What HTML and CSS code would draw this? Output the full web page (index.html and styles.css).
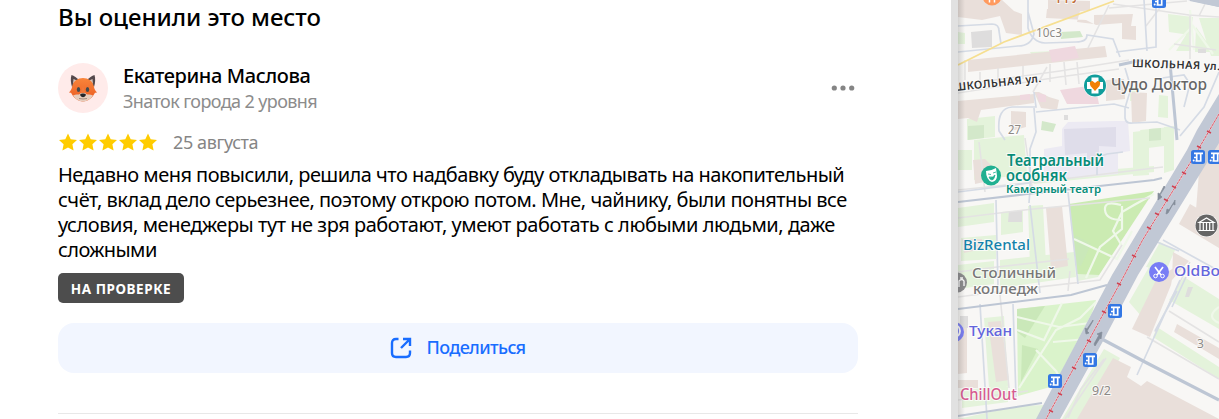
FILE: index.html
```html
<!DOCTYPE html>
<html lang="ru">
<head>
  <meta charset="UTF-8" />
  <meta name="viewport" content="width=device-width, initial-scale=1.0"/>
  <title>Отзыв</title>
  <link rel="stylesheet" href="styles.css">
</head>
<body>
  <main class="panel">
    <h2 class="title">Вы оценили это место</h2>

    <div class="author">
      <div class="avatar">
        <svg width="30" height="28" viewBox="0 0 30 28">
          <defs>
            <linearGradient id="fur" x1="0" y1="0" x2="0" y2="1">
              <stop offset="0" stop-color="#f9853a"/>
              <stop offset="1" stop-color="#ea5a22"/>
            </linearGradient>
          </defs>
          <path d="M3.500 1C2.500 4 2.600 9 4 13l7-7C9 4 6 1.500 3.500 1z" fill="#54484b"/>
          <path d="M26.500 1c1 3 .9 8-.5 12l-7-7c2-2 5-4.500 7.500-5z" fill="#54484b"/>
          <path d="M5.500 5l-.5 5 4-3.500zM24.500 5l.5 5-4-3.500z" fill="#d8c1b6"/>
          <path d="M15 4C10 4 5 7 4 13c-.3 2-1.500 4-3 5.500 1 .2 1.500.2 2 .2C5 23 10 27.500 15 27.500S25 23 27 18.700c.5 0 1 0 2-.2-1.500-1.500-2.700-3.500-3-5.500C25 7 20 4 15 4z" fill="url(#fur)"/>
          <path d="M5 21.500c3-1.500 5-.5 7-1.500l3-4 3 4c2 1 4 0 7 1.500C22.500 25 19 27.500 15 27.500S7.500 25 5 21.500z" fill="#e6cdbd"/>
          <path d="M12.500 19L15 12l2.500 7z" fill="#f07a3c"/>
          <ellipse cx="10.500" cy="15.500" rx="1.700" ry="2.500" fill="#454b4d"/>
          <ellipse cx="19.500" cy="15.500" rx="1.700" ry="2.500" fill="#454b4d"/>
          <path d="M12 20.500c1-1.500 5-1.500 6 0 0 1.500-2 2.700-3 2.700s-3-1.200-3-2.700z" fill="#242629"/>
          <path d="M11 24.500q4 1 8 0" stroke="#a08a7e" fill="none"/>
        </svg>
      </div>
      <div class="who">
        <div class="name">Екатерина Маслова</div>
        <div class="level">Знаток города 2 уровня</div>
      </div>
      <svg class="more" width="24" height="8" viewBox="0 0 24 8">
        <circle cx="3.300" cy="4" r="2.600"/><circle cx="12" cy="4" r="2.600"/><circle cx="20.700" cy="4" r="2.600"/>
      </svg>
    </div>

    <div class="rating">
      <svg width="100" height="20" viewBox="0 0 100 20">
        <defs>
          <path id="star" d="M10 1.500l2.700 5.700 6.300.8-4.600 4.200 1.200 6.200-5.600-3-5.600 3 1.200-6.200L1 8l6.300-.8z"/>
        </defs>
        <use href="#star"/><use href="#star" x="20"/><use href="#star" x="40"/><use href="#star" x="60"/><use href="#star" x="80"/>
      </svg>
      <span class="date">25 августа</span>
    </div>

    <p class="text">
      <span class="l1">Недавно меня повысили, решила что надбавку буду откладывать на накопительный</span><br>
      <span class="l2">счёт, вклад дело серьезнее, поэтому открою потом. Мне, чайнику, были понятны все</span><br>
      <span class="l3">условия, менеджеры тут не зря работают, умеют работать с любыми людьми, даже</span><br>
      <span class="l4">сложными</span>
    </p>

    <div class="status">НА ПРОВЕРКЕ</div>

    <button class="share">
      <svg width="24" height="24" viewBox="0 0 24 24">
        <path d="M9.500 3H7Q3 3 3 7v10q0 4 4 4h10q4 0 4-4v-2.500M14 3h7v7M20.500 3.500L12 12"/>
      </svg>
      <span>Поделиться</span>
    </button>

    <hr class="line">
  </main>

  <div class="edge"></div>

  <svg class="map" viewBox="958 0 261 419">
    <defs>
      <linearGradient id="shade">
        <stop offset="0" stop-color="#555" stop-opacity=".22"/>
        <stop offset="1" stop-color="#555" stop-opacity="0"/>
      </linearGradient>
      <g id="bus">
        <rect x="-7" y="-7" width="14" height="14" rx="2.500" fill="#3377e4"/>
        <path d="M-4-3.700h9M-1.300-3.500v7M2.700-3.500v8M-2 .500h-2M-2.500 4h6" stroke="#fff" stroke-width="1.700" fill="none"/>
        <circle cx="-4.300" cy="3.500" r="1" fill="#fff"/>
      </g>
    </defs>
    <rect x="951" width="268" height="419" fill="#f8f7f5"/>

    <!-- lawns -->
    <g fill="#e4f3db">
      <path d="M1168 14l25 3-3 18-21-3zM1199 18h20v38h-8zM1176 51l13-21 2 21zM1196 27l18 25h-19z"/>
      <path d="M958 32l7 1v11h-7zM967 119l28-3v21l-28 3zM958 150h14v20h-14zM1030 52l54-2 2 8-52 1zM1130 87h8v14h-8zM1159 95l9 1v22l-10-1zM1140 130l30-3 2 18-24 3z"/>
      <path d="M1133 132l16-2v45l-16 1zM1164 127l10-1v44l-10 3zM974 140l50-5 3 40-53 5zM1028 176l126-10v6l-120 12z"/>
      <path d="M958 208l36-5v19l-36 5zM961 238l35-3v24l-35 2zM1028 206l15-1 3 59-16 3zM1001 212l22-2v22l-22 3z"/>
      <path d="M958 265l36-4v23l-36 5zM1000 260l74-8 2 25-76 11zM1078 254l35-3-15 26-20 4zM984 318l20-2 4 70-19 2zM962 391l46-7v18l-46 6z"/>
      <path d="M958 419l60-13 28-1-9 14zM1104 349l16 9-34 61h-24zM1129 302l24-42 20 14-25 50zM1146 267l14-25 15 8-9 21zM1184 277l35 22v30l-50-29zM1157 327l62 40v12l-66-42z"/>
    </g>
    <g fill="#cbebb2">
      <path d="M1069 204l85-13-55 84-22-1z"/>
    </g>
    <g fill="#daf3cb">
      <path d="M1017 309l79-9-4 13-38 73-36 10z"/>
    </g>
    <path d="M1017 309l28-3-20 32-8-6zM1022 345l16 4-17 33zM1075 235l16 9-10 22-5-2z" fill="#cae8b9"/>
    <g fill="#d3e8ca">
      <path d="M1149 129l12-1v12l-12 1zM1042 121l14 3-3 8-12-2zM968 126l16-1v13l-16 2zM1060 32l20-1 3 6-22 2z"/>
    </g>
    <g fill="none" stroke="#eff8e9" stroke-width="2.200">
      <path d="M1017 317l42 10 31-4M1096 302l-16 16-24 12-37 58M1062 303l-18 37-27-10M1036 350l20 21 8 14M1053 342l34-3"/>
      <path d="M1074 239l28 13 15 7 15-28M1154 194l-20 11-12 7-9 19 9 15M1121 205q-17-5-16 5t17 10M1122 206v23l-22 18-14 31"/>
      <path d="M1169 50l24-24 20 28M1190 10l4 40M1219 307q-14 10 0 16"/>
    </g>

    <!-- buildings -->
    <g fill="#e9dfda">
      <path d="M958 0h44l12 11 8 3v21l-16-2-6-17-18 4-24-3zM1048 0l42 1v9l-42 6zM1047 9l33 2-3 11 17 2v-9l39-1-2 12h5v14l-14-1V23l-26 2-10-5-40-2z"/>
      <path d="M968 60l137-14 2 11-139 15zM958 101l76-7v9l-53 7-4 12-9-4-10 1zM1034 92l5 0 10 5 10 3-2 10-16-2zM1106 80l18-1 1 20-19 2zM1131 92l16 1-1 28-14 2z"/>
      <path d="M1011 111l15 1v15l-15 4zM973 160l12-1 8 8v13l-18 4zM1046 208l16-2 6 60-17 3zM962 239h20v10l-18 4z"/>
      <path d="M958 323l9-1v51l-9 1zM988 322l13-1 8 59-13 2zM1113 358l18 9-4 10 14 9 6-5 72 38H1077zM1157 278l17-10-3 17-21 52-18-8z"/>
      <path d="M1177 324l42 24v11l-45-27zM1199 172l20-34v84l-23-12zM1190 204l29 17v27l-40-24zM1173 252l16 9-17 19zM958 380h20v8h-20z"/>
    </g>
    <g fill="#efd8df">
      <path d="M1049 50l26-4 4 12-27 4zM1060 90l35-5 4 19h-32zM1037 93l9 2v7h-7zM1020 95l10-1v6h-10z"/>
    </g>
    <path d="M1116 121h12l2 30-12 2v21l-74 7v-32l18-3v-17l6-7z" fill="#eceaf3"/>
    <path d="M1064 129l52-2v20l-17-1v14l-12 1v-8l-22 2z" fill="#dfddea"/>
    <g fill="#dedddd">
      <path d="M971 32l21-2v17l-20 1zM1009 211h13v11h-14zM1198 49h8v4h-8zM1064 115h4v5h-4zM960 316h8v12h-8zM1188 287h5l-4 10h-4z"/>
    </g>

    <!-- minor streets -->
    <g fill="none" stroke="#e4e3e3" stroke-width="1.600">
      <path d="M958 85l102-14 69-11M958 93l101-16 60-8M1109 5l-21 43M1109 8l78-7M1166 0l-20 26M980 72v14M998 68v16M1023 66v13M1050 64v18M1064 62l2 23M1077 62l2 22M1033 92l14-25M965 60v20"/>
      <path d="M958 190l88-9 117-14M958 218l75-9 117-11M1044 193l-36-4M1025 138l7 49M979 142l6 50M1113 4l76 11 30 2M1190 15v44M1216 50l-42-6"/>
      <path d="M958 297l46-6 96-11 22-35M958 272l39-5 72-8M1000 295l9 93M1070 271l-2 20M958 400l70-9M1106 358l-41 61M1068 418l13-29 23-30M1169 311l50 31M1147 337l72 42M1190 262l-35 70M1207 0l-8 16"/>
    </g>

    <!-- streets -->
    <g fill="none" stroke="#d5dbe5" stroke-width="1.700">
      <path d="M958 26l34-2q7 0 7 7l2 13M958 52l60-6q13 0 16-12l-6-22V0M1028 12v16q4 14 17 15l31-1q11 0 11-7l26 4 7 18M1144 0l3 51M1156 0v47l-40 5"/>
      <path d="M1125 68l6 20-6 20v10q1 6 8 5l24-1 23 8M1036 112l78-8 15 4M1005 140l-6-9q-2-23 13-24h24l-2-15M1034 108l2 24-6 17v40l-1 14M1068 192l10 92M1097 175v-13q2-6 10-8l16-2"/>
      <path d="M996 200l2 87M1030 205l10 88M980 304l7 115M1013 304l3 93M958 192l71-9M1162 78l22-3 6 9-6 23M1219 72l-15 35-24 29M1181 195l-24 45M1157 242l22 9M1163 240l56 31M1180 280l-43 95M1186 277l-14 30M1155 331l22-40"/>
    </g>
    <g fill="none" stroke="#bdc6d4">
      <path d="M958 202l69-8 127-14 8-2" stroke-width="2.200"/>
      <path d="M958 309l113-14 36-10M958 416l84-13" stroke-width="2"/>
      <path d="M1100 338l45 24 74 38" stroke-width="3.200"/>
      <path d="M1119 65l23-5M1170 63l7 77" stroke-width="3"/>
      <path d="M1190 0l29 6" stroke-width="2"/>
    </g>
    <path d="M1188 0h31v7z" fill="#c2c9d5"/>

    <!-- metro line and the main road -->
    <path d="M958 65L1004 42 1114 1" fill="none" stroke="#f6df91" stroke-width="1.800"/>
    <path d="M1219 94l-22 36-10 20-75 125-76 144h24l42-76 36-68 81-132z" fill="#c1c8d5"/>
    <path d="M1219 114l-24 41-34 55-19 31-17 33-79 145" fill="none" stroke="#f0d5da" stroke-width="1.600"/>
    <path d="M1219 114l-24 41-34 55-19 31-17 33-79 145" fill="none" stroke="#d65a69" stroke-width="1" stroke-dasharray="3 .6"/>
    <path d="M1207 131l4 2M1197 146l4 2M1182 172l4 2M1172 186l4 2M1164 199l4 2M1155 213l4 2M1147 227l4 2M1132 255l4 2M1117 283l4 2M1102 311l4 2M1087 340l4 2M1072 367l4 2M1058 393l4 2M1049 410l4 2" stroke="#cf4252" stroke-width="1.400"/>
    <path d="M1165 187l-5 8 2 2-4 3v-7l2 1 4-8zM1174 202l-5 8-2-1-1 5 2-1 5-9 2 1v-5zM1093 321l-6 10 2 2-3 1-1-6 2 1 6-9zM1094 344l5-9-2-1 5-2-1 7-1-1-5 8z" stroke="#848d9a" stroke-width=".7" fill="#848d9a"/>

    <!-- bus stops -->
    <use href="#bus" x="1159" y="1"/>
    <use href="#bus" x="1198" y="157"/>
    <use href="#bus" x="1215" y="157"/>
    <use href="#bus" x="1115" y="311"/>
    <use href="#bus" x="1090" y="360"/>
    <use href="#bus" x="1055" y="381"/>

    <!-- places -->
    <circle cx="992" cy="-4" r="9.500" fill="#ff9a5e"/>
    <path d="M989.500-1v3.500M994.500-1v3.500" stroke="#fff" stroke-width="1.500"/>
    <circle cx="1095" cy="85.500" r="11.500" fill="#fff"/>
    <circle cx="1095" cy="85.500" r="11" fill="#109d9b"/>
    <path d="M1091.500 77.500h7v4.500h4.500v7h-4.500v4.500h-7v-4.500h-4.500v-7h4.500z" fill="#fff"/>
    <path d="M1095 91l-4.500-5q-2-5 2-5l2.500 2 2.500-2q4 0 2 5z" fill="#f08105"/>
    <circle cx="991" cy="175.500" r="10" fill="#20b091"/>
    <path d="M986 171q5 0 10-3l1 8q0 5-5 6-6-2-6-11z" fill="#fff"/>
    <path d="M988 174l3 .5M993 173l3-1M989 177q4 1 6-2-1 5-3 5t-3-3z" stroke="#20b091" stroke-width=".8" fill="#20b091"/>
    <circle cx="1206.500" cy="225.500" r="11.500" fill="#fff"/>
    <circle cx="1206.500" cy="225.500" r="11" fill="#656565"/>
    <path d="M1199 222.500l7.500-4.500 7.500 4.500zM1200 223v7M1203.300 223v7M1206.500 223v7M1209.700 223v7M1213 223v7M1198.500 230.500h16" stroke="#fff" stroke-width="1.200" fill="none"/>
    <circle cx="1159" cy="272" r="10" fill="#787df5"/>
    <path d="M1155 267l6 8M1163 267l-6 8" stroke="#fff" stroke-width="1.700"/>
    <circle cx="1155.500" cy="276" r="1.800" stroke="#fff" fill="none"/><circle cx="1162.500" cy="276" r="1.800" stroke="#fff" fill="none"/>
    <circle cx="957" cy="282.500" r="10" fill="#8b8b8d"/>
    <path d="M959 287v-6q3-3 5 0v5M960 278h3" stroke="#fff" stroke-width="1.300" fill="none"/>
    <circle cx="954" cy="332" r="10" fill="#787df5"/>
    <path d="M958 326q4 5 0 10" stroke="#fff" stroke-width="1.800" fill="none"/>

    <g class="labels">
      <text x="1043" y="-1" font-size="17" fill="#c06a35" textLength="36" lengthAdjust="spacingAndGlyphs">Терру</text>
      <text class="num" x="1036" y="37" textLength="26" lengthAdjust="spacingAndGlyphs">10с3</text>
      <text class="num" x="1008" y="134" textLength="13" lengthAdjust="spacingAndGlyphs">27</text>
      <text class="num" x="1197" y="348">3</text>
      <text class="num" x="1092" y="395" textLength="19" lengthAdjust="spacingAndGlyphs">9/2</text>
      <text class="street" x="955" y="91" textLength="87" transform="rotate(-6 955 91)">ШКОЛЬНАЯ ул.</text>
      <text class="street" x="1132" y="67" textLength="88" transform="rotate(2 1132 67)">ШКОЛЬНАЯ ул.</text>
      <text x="1111" y="90" font-size="16" fill="#666" textLength="96" lengthAdjust="spacingAndGlyphs">Чудо Доктор</text>
      <g class="theatre">
        <text x="1007" y="165.500" font-size="15.500" textLength="97" lengthAdjust="spacingAndGlyphs">Театральный</text>
        <text x="1006" y="181" font-size="15.500" textLength="61" lengthAdjust="spacingAndGlyphs">особняк</text>
        <text x="1006" y="193" font-size="11.500" textLength="95" lengthAdjust="spacingAndGlyphs">Камерный театр</text>
      </g>
      <text x="963" y="249.500" font-size="15" fill="#1482aa" textLength="67" lengthAdjust="spacingAndGlyphs">BizRental</text>
      <text x="972" y="278" font-size="15" fill="#777" textLength="84" lengthAdjust="spacingAndGlyphs">Столичный</text>
      <text x="973" y="294" font-size="15" fill="#777" textLength="65" lengthAdjust="spacingAndGlyphs">колледж</text>
      <text x="1174" y="276" font-size="15" fill="#6365dc" textLength="46" lengthAdjust="spacingAndGlyphs">OldBo</text>
      <text x="969" y="336" font-size="15" fill="#6365dc" textLength="43" lengthAdjust="spacingAndGlyphs">Тукан</text>
      <text x="960" y="400" font-size="15.500" fill="#d65b90" textLength="57" lengthAdjust="spacingAndGlyphs">ChillOut</text>
    </g>

    <rect x="958" width="7" height="419" fill="url(#shade)"/>
  </svg>
</body>
</html>
```
FILE: styles.css
```css
* { box-sizing: border-box; }
body {
  margin: 0;
  height: 419px;
  display: flex;
  overflow: hidden;
  background-color: #fff;
  color: #000;
  font-family: "Noto Sans", sans-serif;
}
.panel {
  width: 951px;
  padding: 0 93px 0 58px;
  white-space: nowrap;
}
.title {
  margin: 2px 0 31px;
  font-size: 24px;
  line-height: 30px;
  font-weight: 550;
  letter-spacing: -0.04px;
}
.author {
  display: flex;
  align-items: center;
  height: 50px;
}
.avatar {
  width: 50px;
  height: 50px;
  border-radius: 50%;
  background-color: #ffebea;
  display: flex;
  align-items: center;
  justify-content: center;
}
.who { margin-left: 15px; }
.name {
  font-size: 20px;
  line-height: 26px;
  font-weight: 500;
  letter-spacing: -0.4px;
}
.level {
  font-size: 18px;
  line-height: 24px;
  color: #8c8c8c;
  letter-spacing: -0.6px;
}
.more {
  margin-left: auto;
  margin-right: 3px;
  fill: #858585;
}
.rating {
  display: flex;
  align-items: center;
  height: 24px;
  margin-top: 17px;
}
.rating svg {
  fill: #fc0;
}
.date {
  margin-left: 15px;
  font-size: 18px;
  color: #858585;
  letter-spacing: -0.4px;
}
.text {
  margin: 8px 0 0;
  font-size: 20px;
  line-height: 25px;
}
.l1 { letter-spacing: -0.53px; }
.l2 { letter-spacing: -0.5px; }
.l3 { letter-spacing: -0.46px; }
.l4 { letter-spacing: -0.6px; }
.status {
  width: 126px;
  height: 30px;
  margin-top: 11px;
  border-radius: 5px;
  background-color: #4d4d4d;
  color: #fff;
  font-size: 13.5px;
  line-height: 32px;
  font-weight: 700;
  text-align: center;
  letter-spacing: 0.55px;
}
.share {
  width: 800px;
  height: 50px;
  margin-top: 20px;
  padding: 0 2px 0 0;
  border: none;
  border-radius: 16px;
  background-color: #f2f6ff;
  color: #196dff;
  display: flex;
  align-items: center;
  justify-content: center;
  gap: 14px;
  font-family: inherit;
  font-size: 18px;
  font-weight: 500;
  letter-spacing: -0.65px;
}
.share svg {
  fill: none;
  stroke: #196dff;
  stroke-width: 2.4;
}
.share span {
  padding-bottom: 2px;
}
.line {
  width: 800px;
  margin: 40px 0 0;
  border: none;
  border-top: 1px solid #e8e8e8;
}
.edge {
  width: 7px;
  background-color: #e1e1e1;
}
.map {
  width: 261px;
  height: 419px;
  font-family: "Noto Sans", sans-serif;
}
.labels text {
  font-weight: 500;
  paint-order: stroke;
  stroke: rgba(255,255,255,0.75);
  stroke-width: 2px;
}
.labels .theatre text {
  font-weight: 600;
  fill: #078c78;
}
.labels .num {
  font-size: 12px;
  font-weight: 400;
  fill: #8c8986;
}
.labels .street {
  font-size: 11px;
  font-weight: 600;
  fill: #333;
}
```
